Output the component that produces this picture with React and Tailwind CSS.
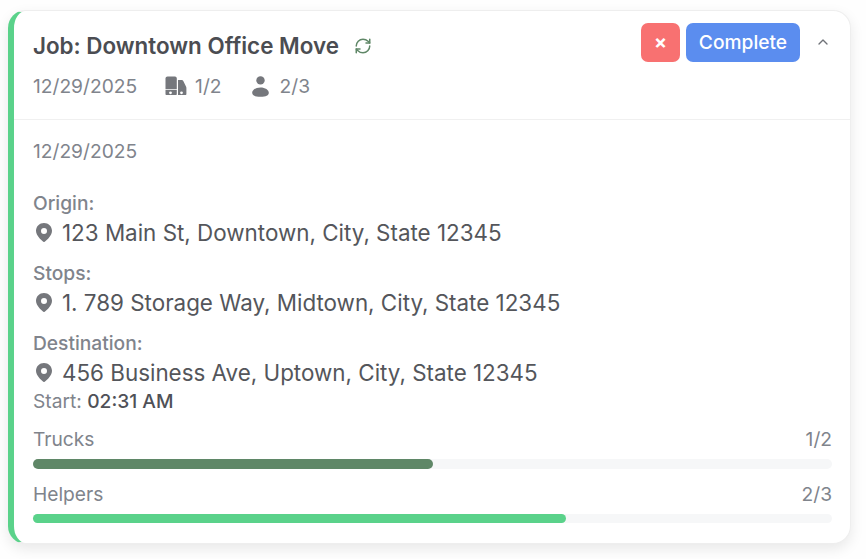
import { RefreshCw, ChevronUp } from 'lucide-react';

const TruckIcon = () => (
  <svg viewBox="0 0 22 20" className="w-[22px] h-[20px]" fill="#75777c">
    <path d="M0.5 2.5C0.5 1.4 1.4 0.5 2.5 0.5H10C11 0.5 11.8 1.4 11.8 2.5V13.2H0.5V2.5Z" />
    <path d="M0.5 14H11.8V18C11.8 18.6 11.4 19 10.8 19H1.5C0.9 19 0.5 18.6 0.5 18V14Z" />
    <path d="M13 4H16.8C17.4 4 18 4.3 18.3 4.9L21 10.5C21.3 11 21.4 11.4 21.4 12V18C21.4 18.6 21 19 20.4 19H13V4Z" />
    <circle cx="5.5" cy="16.8" r="1.4" fill="#fff" />
    <circle cx="16.5" cy="16.8" r="1.4" fill="#fff" />
  </svg>
);

const PersonIcon = () => (
  <svg viewBox="0 0 17 21" className="w-[17px] h-[21px]" fill="#75777c">
    <circle cx="8.5" cy="4.4" r="4.2" />
    <path d="M8.5 11.5C3.8 11.5 0.2 14 0.2 16.8 0.2 19.5 3 20.8 8.5 20.8 14 20.8 16.8 19.5 16.8 16.8 16.8 14 13.2 11.5 8.5 11.5Z" />
  </svg>
);

const Pin = () => (
  <svg viewBox="0 0 16 19" className="w-4 h-[19px] ml-[3px] shrink-0" fill="#75777c">
    <path fillRule="evenodd" d="M8 0C3.6 0 0 3.4 0 7.7 0 12.5 5 16.8 7 18.6A1.5 1.5 0 0 0 9 18.6C11 16.8 16 12.5 16 7.7 16 3.4 12.4 0 8 0ZM8 5A3 3 0 1 1 8 11 3 3 0 0 1 8 5Z" />
  </svg>
);

const Address = ({ label, text }) => (
  <div>
    <div className="text-[19.2px] leading-[24px] font-medium text-[#80848c]">{label}</div>
    <div className="flex items-center gap-[10px] h-[35px] text-[22.4px] text-[#54565b]">
      <Pin />
      <span>{text}</span>
    </div>
  </div>
);

const Bar = ({ label, value, pct, color, height }) => (
  <div>
    <div className="flex justify-between text-[19.2px] leading-[24px] text-[#80848c]">
      <span>{label}</span>
      <span>{value}</span>
    </div>
    <div className={`mt-2 rounded-full bg-[#f6f7f8] ${height}`}>
      <div className={`h-full rounded-full ${color}`} style={{ width: `${pct}%` }} />
    </div>
  </div>
);

export default function App() {
  return (
    <div className="w-[866px] h-[559px] bg-[#fefefe] pt-[10px] pl-2 font-['Inter',sans-serif] overflow-hidden">
      <div className="w-[843px] h-[534px] bg-white rounded-[18px] border border-[#eeeeee] border-l-[6px] border-l-[#5ad28a] shadow-[0_5px_14px_rgba(0,0,0,0.09)] overflow-hidden">
        <div className="h-[109px] border-b border-[#f0f0f0] pl-[19px] pr-[19px] pt-[12px] flex justify-between">
          <div>
            <div className="flex items-center gap-[15px] h-[46px]">
              <span className="text-[22.4px] font-semibold text-[#4b4d52]">Job: Downtown Office Move</span>
              <RefreshCw className="w-[18px] h-[18px] text-[#5f8767]" />
            </div>
            <div className="flex items-center mt-[5px] h-[24px] text-[19.2px] text-[#80848c]">
              <span>12/29/2025</span>
              <span className="ml-[28px]"><TruckIcon /></span>
              <span className="ml-2">1/2</span>
              <span className="ml-[30px]"><PersonIcon /></span>
              <span className="ml-[11px]">2/3</span>
            </div>
          </div>
          <div className="flex items-start gap-[6px]">
            <button className="w-[39px] h-[39px] rounded-[7px] bg-[#f87171] text-white font-bold text-[19.2px]">×</button>
            <button className="w-[114px] h-[39px] rounded-[7px] bg-[#5b8def] text-white font-medium text-[19.2px]">Complete</button>
            <ChevronUp className="ml-[9px] mt-[11px] w-4 h-4 text-[#6f7278]" />
          </div>
        </div>
        <div className="pl-[19px] pr-[18px] pt-[19px]">
          <div className="text-[19.2px] leading-[24px] text-[#80848c] mb-[28px]">12/29/2025</div>
          <div className="flex flex-col gap-[11px]">
            <Address label="Origin:" text="123 Main St, Downtown, City, State 12345" />
            <Address label="Stops:" text="1. 789 Storage Way, Midtown, City, State 12345" />
            <Address label="Destination:" text="456 Business Ave, Uptown, City, State 12345" />
          </div>
          <div className="text-[19.2px] leading-[22px] text-[#80848c]">
            Start: <span className="font-medium text-[#4f5157]">02:31 AM</span>
          </div>
          <div className="mt-[15px] flex flex-col gap-[13px]">
            <Bar label="Trucks" value="1/2" pct={50} color="bg-[#5f8767]" height="h-[10px]" />
            <Bar label="Helpers" value="2/3" pct={66.7} color="bg-[#5ad28a]" height="h-[9px]" />
          </div>
        </div>
      </div>
    </div>
  );
}
